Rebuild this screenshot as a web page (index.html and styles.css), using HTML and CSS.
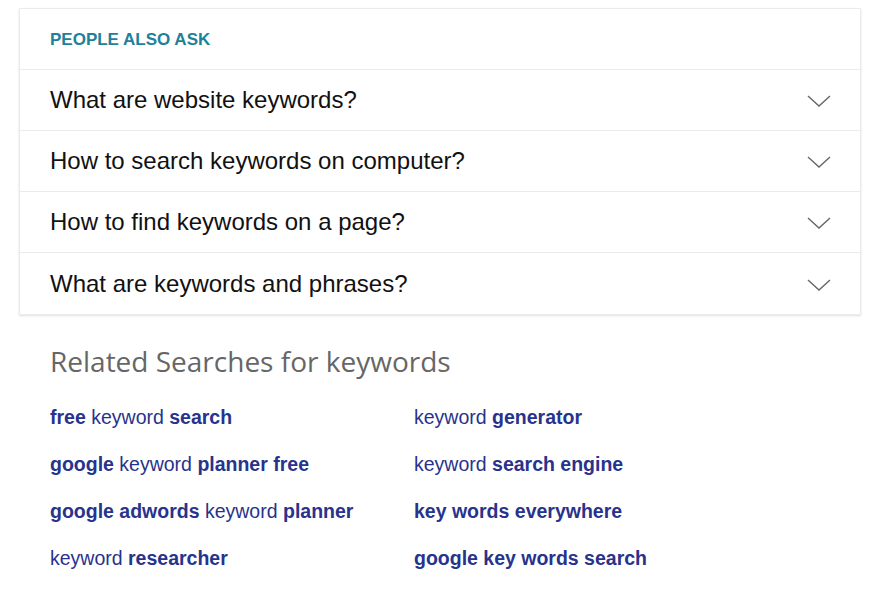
FILE: index.html
```html
<!DOCTYPE html>
<html>
<head>
<meta charset="utf-8">
<link rel="stylesheet" href="styles.css">
</head>
<body>
<div class="page">
  <section class="paa">
    <div class="paa-head">PEOPLE ALSO ASK</div>
    <div class="paa-row"><span>What are website keywords?</span><svg class="chev" viewBox="0 0 24 12" width="24" height="12"><path d="M1 1 L12 11 L23 1" fill="none" stroke="#666" stroke-width="1.4"/></svg></div>
    <div class="paa-row"><span>How to search keywords on computer?</span><svg class="chev" viewBox="0 0 24 12" width="24" height="12"><path d="M1 1 L12 11 L23 1" fill="none" stroke="#666" stroke-width="1.4"/></svg></div>
    <div class="paa-row"><span>How to find keywords on a page?</span><svg class="chev" viewBox="0 0 24 12" width="24" height="12"><path d="M1 1 L12 11 L23 1" fill="none" stroke="#666" stroke-width="1.4"/></svg></div>
    <div class="paa-row"><span>What are keywords and phrases?</span><svg class="chev" viewBox="0 0 24 12" width="24" height="12"><path d="M1 1 L12 11 L23 1" fill="none" stroke="#666" stroke-width="1.4"/></svg></div>
  </section>
  <section class="related">
    <h2>Related Searches for keywords</h2>
    <div class="grid">
      <a><b>free</b> keyword <b>search</b></a>
      <a>keyword <b>generator</b></a>
      <a><b>google</b> keyword <b>planner free</b></a>
      <a>keyword <b>search engine</b></a>
      <a><b>google adwords</b> keyword <b>planner</b></a>
      <a><b>key words everywhere</b></a>
      <a>keyword <b>researcher</b></a>
      <a><b>google key words search</b></a>
    </div>
  </section>
</div>
</body>
</html>
```
FILE: styles.css
```css
html, body { margin: 0; background: #fff; }
.page { padding: 8px 14px 0 19px; font-family: "Liberation Sans", Arial, sans-serif; }
.paa {
  width: 840px;
  border: 1px solid #ebebeb;
  box-shadow: 0 1px 2px rgba(0,0,0,0.12);
}
.paa-head {
  height: 61px;
  box-sizing: border-box;
  padding: 21px 30px 0;
  font-size: 17px;
  line-height: 20px;
  font-weight: bold;
  color: #1e819a;
  border-bottom: 1px solid #ebebeb;
}
.paa-row {
  height: 61px;
  box-sizing: border-box;
  padding: 0 29px 0 30px;
  display: flex;
  align-items: center;
  justify-content: space-between;
  font-size: 24px;
  color: #111;
  border-bottom: 1px solid #ebebeb;
}
.paa-row:last-child { border-bottom: none; }
.chev { display: block; margin-top: 2px; }
.related { padding: 26px 0 0 31px; }
.related h2 {
  margin: 0;
  font-family: "Open Sans", sans-serif;
  font-weight: normal;
  font-size: 28px;
  line-height: 40px;
  color: #666;
}
.grid {
  margin-top: 25px;
  display: grid;
  grid-template-columns: 364px auto;
  row-gap: 24px;
}
.grid a {
  font-size: 19.5px;
  line-height: 23px;
  color: #27338c;
}
.grid b { font-weight: bold; }
```
